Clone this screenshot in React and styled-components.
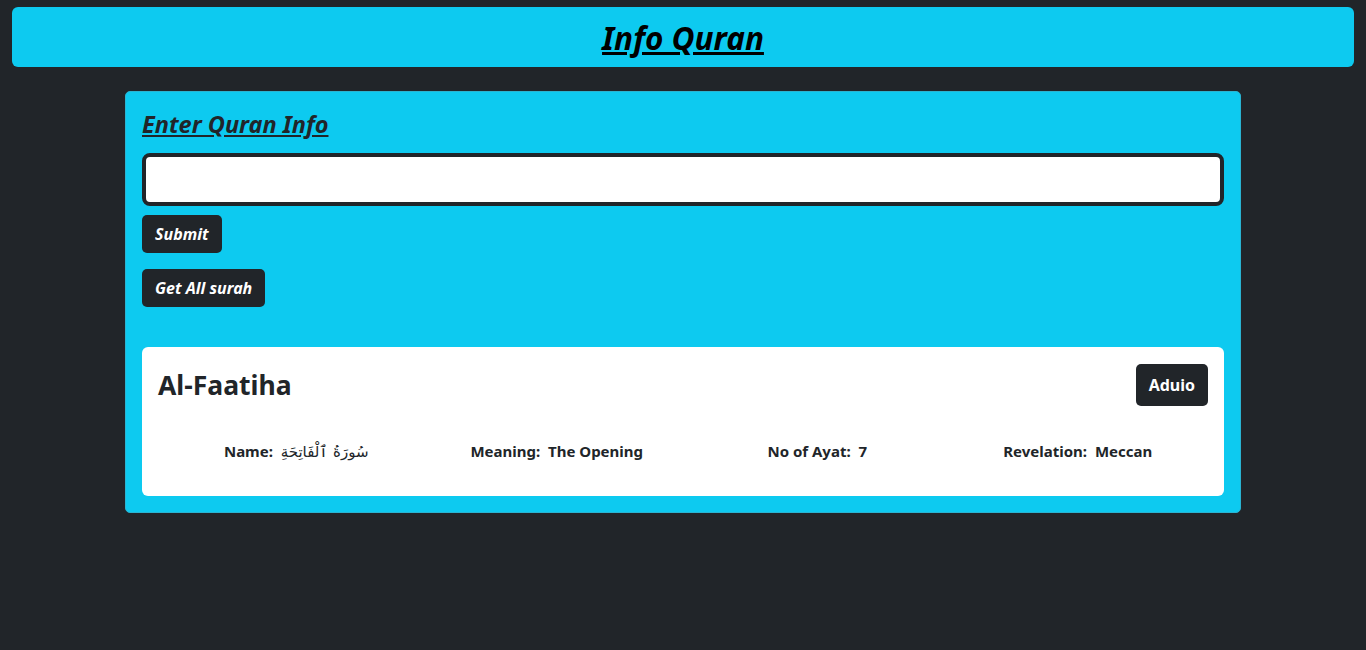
import styled, { createGlobalStyle } from 'styled-components';

const GlobalStyle = createGlobalStyle`
  html, body {
    margin: 0;
    background: #212529;
    font-family: 'Noto Sans', 'DejaVu Sans', sans-serif;
    color: #212529;
  }
  * { box-sizing: border-box; }
`;

const surah = {
  englishName: 'Al-Faatiha',
  name: 'سُورَةُ ٱلْفَاتِحَةِ',
  meaning: 'The Opening',
  ayahs: 7,
  revelation: 'Meccan',
};

const App = () => {
  return (
    <>
      <GlobalStyle />
      <Page>
        <Header>
          <h1>Info Quran</h1>
        </Header>
        <Panel>
          <h3>Enter Quran Info</h3>
          <Input type='text' />
          <Button $italic>Submit</Button>
          <Button $italic>Get All surah</Button>
          <SurahCard>
            <CardTop>
              <h2>{surah.englishName}</h2>
              <Button $tall>Aduio</Button>
            </CardTop>
            <InfoRow>
              <InfoItem>Name:&nbsp; <Arabic>{surah.name}</Arabic></InfoItem>
              <InfoItem>Meaning:&nbsp; {surah.meaning}</InfoItem>
              <InfoItem>No of Ayat:&nbsp; {surah.ayahs}</InfoItem>
              <InfoItem>Revelation:&nbsp; {surah.revelation}</InfoItem>
            </InfoRow>
          </SurahCard>
        </Panel>
      </Page>
    </>
  );
};

const Page = styled.main`
  min-height: 650px;
  padding: 7px 12px 40px;
`;

const Header = styled.header`
  height: 60px;
  background: #0dcaf0;
  border-radius: 6px;
  display: flex;
  align-items: center;
  justify-content: center;
  h1 {
    margin: 0;
    font-size: 31.5px;
    font-weight: 700;
    font-style: italic;
    text-decoration: underline;
    color: #000;
  }
`;

const Panel = styled.section`
  width: 1116px;
  margin: 24px auto 0;
  background: #0dcaf0;
  border: 1px solid #2ab4d2;
  border-radius: 5px;
  padding: 16px 16px 16px;
  display: flex;
  flex-direction: column;
  align-items: flex-start;
  h3 {
    margin: 0 0 13px;
    font-size: 23.5px;
    font-weight: 700;
    font-style: italic;
    text-decoration: underline;
  }
`;

const Input = styled.input`
  width: 100%;
  height: 53px;
  border: 4px solid #212529;
  border-radius: 8px;
  background: #fff;
  margin-bottom: 9px;
  outline: none;
`;

const Button = styled.button`
  background: #212529;
  color: #fff;
  border: none;
  border-radius: 5px;
  font-family: inherit;
  font-size: 16px;
  font-weight: 700;
  font-style: ${(p) => (p.$italic ? 'italic' : 'normal')};
  height: ${(p) => (p.$tall ? '42px' : '38px')};
  padding: 0 13px;
  margin-top: ${(p) => (p.$tall ? '1px' : '0')};
  margin-bottom: ${(p) => (p.$tall ? '0' : '16px')};
  cursor: pointer;
`;

const SurahCard = styled.article`
  width: 100%;
  margin-top: 24px;
  background: #fff;
  border-radius: 6px;
  padding: 16px 16px 35px;
`;

const CardTop = styled.div`
  display: flex;
  justify-content: space-between;
  align-items: flex-start;
  h2 {
    margin: 4px 0 0;
    font-size: 26.5px;
    font-weight: 700;
  }
`;

const InfoRow = styled.div`
  display: grid;
  grid-template-columns: repeat(4, 1fr);
  margin-top: 35px;
  padding-left: 8px;
`;

const InfoItem = styled.span`
  text-align: center;
  font-size: 15px;
  font-weight: 700;
`;

const Arabic = styled.span`
  font-family: 'DejaVu Sans', sans-serif;
  font-weight: 400;
  font-size: 15px;
`;

export default App;
